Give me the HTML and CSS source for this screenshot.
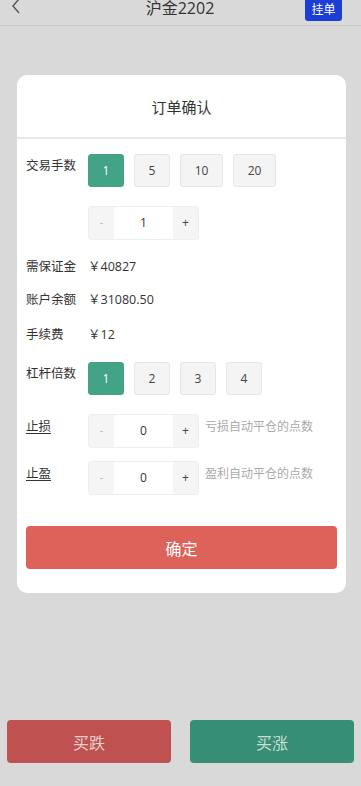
FILE: index.html
```html
<!DOCTYPE html>
<html lang="zh">
<head>
  <meta charset="UTF-8" />
  <meta name="viewport" content="width=device-width, initial-scale=1.0"/>
  <title>沪金2202</title>
  <link rel="stylesheet" href="styles.css">
</head>
<body>

<header class="topbar">
  <span class="back">
    <svg width="10" height="16" viewBox="0 0 10 16"><polyline points="8,1 2,8 8,15" fill="none" stroke="#555" stroke-width="1.4"/></svg>
  </span>
  <div class="title">沪金2202</div>
  <span class="pending">挂单</span>
</header>

<section class="card">
  <div class="card-head">订单确认</div>

  <div class="form">
    <div class="row">
      <div class="label">交易手数</div>
      <div class="opts">
        <span class="opt active">1</span>
        <span class="opt">5</span>
        <span class="opt wide">10</span>
        <span class="opt wide">20</span>
      </div>
    </div>

    <div class="row r-step">
      <div class="label"></div>
      <div class="stepper">
        <span class="minus">-</span>
        <span class="val">1</span>
        <span class="plus">+</span>
      </div>
    </div>

    <div class="info i1"><div class="label">需保证金</div><span>￥40827</span></div>
    <div class="info i2"><div class="label">账户余额</div><span>￥31080.50</span></div>
    <div class="info i3"><div class="label">手续费</div><span>￥12</span></div>

    <div class="row r-lever">
      <div class="label">杠杆倍数</div>
      <div class="opts">
        <span class="opt active">1</span>
        <span class="opt">2</span>
        <span class="opt">3</span>
        <span class="opt">4</span>
      </div>
    </div>

    <div class="row r-stop">
      <div class="label"><u>止损</u></div>
      <div class="stepper">
        <span class="minus">-</span>
        <span class="val">0</span>
        <span class="plus">+</span>
      </div>
      <span class="hint">亏损自动平仓的点数</span>
    </div>

    <div class="row r-profit">
      <div class="label"><u>止盈</u></div>
      <div class="stepper">
        <span class="minus">-</span>
        <span class="val">0</span>
        <span class="plus">+</span>
      </div>
      <span class="hint">盈利自动平仓的点数</span>
    </div>

    <button class="confirm">确定</button>
  </div>
</section>

<footer class="actions">
  <button class="buy down">买跌</button>
  <button class="buy up">买涨</button>
</footer>

</body>
</html>
```

FILE: styles.css
```css
body {
  margin: 0;
  min-height: 786px;
  display: flex;
  flex-direction: column;
  font-family: "Open Sans", "Noto Sans CJK SC", sans-serif;
  background-color: #d9d9d9;
  color: #333;
}
.topbar {
  margin-top: -11px;
  height: 36px;
  display: flex;
  align-items: center;
  justify-content: space-between;
  padding: 0 19px 0 11px;
  border-bottom: 1px solid #c8c8c8;
}
.back {
  width: 40px;
  display: flex;
  align-items: center;
  margin-top: -3px;
}
.title {
  font-size: 16px;
  color: #333;
  margin-left: 4px;
}
.pending {
  width: 37px;
  height: 25px;
  line-height: 27px;
  margin-top: 2px;
  text-align: center;
  font-size: 12px;
  color: #fff;
  background-color: #1c3ed4;
  border-radius: 3px;
}
.card {
  margin: 49px 15px 0 17px;
  background: #fff;
  border-radius: 10px;
  overflow: hidden;
}
.card-head {
  height: 62px;
  line-height: 64px;
  text-align: center;
  font-size: 15px;
  color: #333;
  border-bottom: 2px solid #e8e8e8;
}
.form {
  padding: 15px 9px 24px;
}
.row {
  display: flex;
  align-items: flex-start;
}
.label {
  width: 62px;
  flex-shrink: 0;
  font-size: 12.5px;
  line-height: 20px;
  padding-top: 2px;
  color: #333;
}
.label u {
  text-underline-offset: 2px;
}
.opts {
  display: flex;
  gap: 10px;
}
.opt {
  width: 34px;
  height: 31px;
  line-height: 32px;
  text-align: center;
  font-size: 12px;
  color: #444;
  background: #f4f4f4;
  border: 1px solid #e6e6e6;
  border-radius: 3px;
}
.opt.wide {
  width: 41px;
}
.opt.active {
  background: #42a386;
  border-color: #42a386;
  color: #fff;
}
.stepper {
  display: flex;
  width: 109px;
  height: 32px;
  border: 1px solid #eee;
  border-radius: 3px;
  overflow: hidden;
  font-size: 12px;
  line-height: 32px;
  text-align: center;
}
.minus {
  width: 25px;
  background: #f5f5f5;
  color: #bbb;
}
.val {
  flex: 1;
  background: #fff;
  color: #333;
}
.plus {
  width: 25px;
  background: #f5f5f5;
  color: #444;
}
.r-step { margin-top: 19px; }
.info {
  display: flex;
  font-size: 12.5px;
  line-height: 20px;
  color: #333;
}
.info .label { padding-top: 0; }
.i1 { margin-top: 17px; }
.i2 { margin-top: 13px; }
.i3 { margin-top: 15px; }
.r-lever { margin-top: 17px; }
.r-stop { margin-top: 19px; }
.r-profit { margin-top: 13px; }
.r-stop .label,
.r-profit .label { padding-top: 3px; }
.hint {
  margin-left: 6px;
  font-size: 12px;
  line-height: 20px;
  padding-top: 3px;
  color: #aaa;
}
.confirm {
  display: block;
  width: 100%;
  height: 43px;
  margin-top: 31px;
  border: none;
  border-radius: 4px;
  background-color: #dc625a;
  color: #fff;
  font-family: "Noto Sans CJK SC", sans-serif;
  font-size: 16px;
}
.actions {
  margin-top: auto;
  display: flex;
  gap: 19px;
  padding: 0 7px 23px;
}
.buy {
  flex: 1;
  height: 43px;
  border: none;
  border-radius: 4px;
  font-family: "Noto Sans CJK SC", sans-serif;
  font-size: 16px;
  color: rgba(255,255,255,0.72);
}
.down { background-color: #bf5251; }
.up { background-color: #368e74; }
```
